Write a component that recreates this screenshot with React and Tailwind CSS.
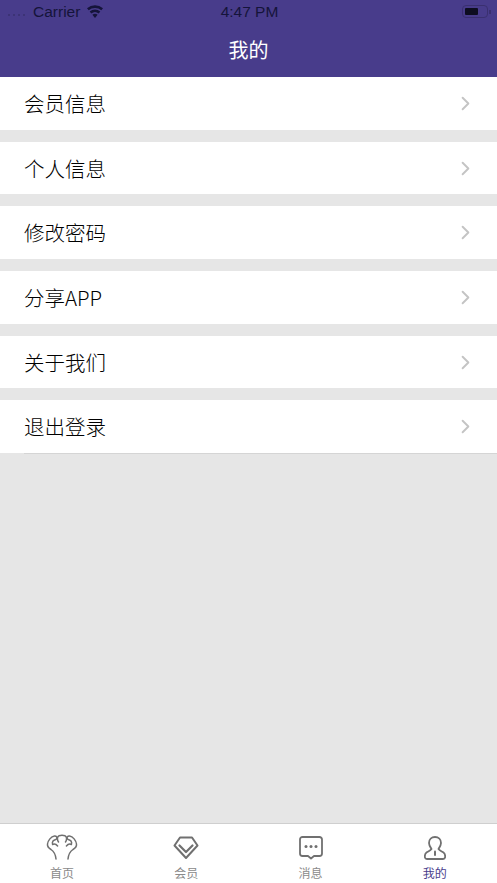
import { ChevronRight } from "lucide-react";

const font = "font-['Noto_Sans_CJK_SC','Liberation_Sans',sans-serif]";
const menu = ["会员信息", "个人信息", "修改密码", "分享APP", "关于我们", "退出登录"];

function MuscleIcon() {
  return (
    <svg width="32" height="28" viewBox="0 0 32 28" fill="none" stroke="#707070" strokeWidth="1.500" strokeLinecap="round" strokeLinejoin="round">
      <path d="M10 25C9.500 20 8 17.500 5 15.500 2.500 14 1.200 12.500 1.500 10 2 6.500 5 2.500 8.500 2c2-.2 3 1.500 2 3-.8.800-2.500.600-3.500 2-.7 1-.8 2.200-.4 3.500 1.500-.8 3.500-.4 5 1.500" />
      <path d="M22 25c.5-5 2-7.500 5-9.500 2.500-1.500 3.800-3 3.500-5.500C30 6.500 27 2.500 23.500 2c-2-.2-3 1.500-2 3 .8.800 2.500.600 3.500 2 .7 1 .8 2.200.4 3.500-1.500-.8-3.500-.4-5 1.500" />
      <path d="M12.500 8C11 6 11 2.500 13 1.800c2-.8 4-.8 6 0 2 .7 2 4.200.5 6.200" />
    </svg>
  );
}

function DiamondIcon() {
  return (
    <svg width="26" height="24" viewBox="0 0 26 24" fill="none" stroke="#707070" strokeWidth="2" strokeLinejoin="round" strokeLinecap="round">
      <path d="M7 1.500h12l5.500 8L13 22 1.500 9.500z" />
      <path d="M6.500 9.500l6.500 6.500 6.500-6.500" strokeWidth="2.200" />
    </svg>
  );
}

function ChatIcon() {
  return (
    <svg width="24" height="24" viewBox="0 0 24 24" fill="none" stroke="#707070" strokeWidth="1.800" strokeLinejoin="round">
      <path d="M3.500 1h17A2.500 2.500 0 0 1 23 3.500v14a2.500 2.500 0 0 1-2.500 2.500H15l-3 2.500L9 20H3.500A2.500 2.500 0 0 1 1 17.500v-14A2.500 2.500 0 0 1 3.500 1z" />
      <circle cx="7" cy="10.500" r="1.500" fill="#707070" stroke="none" />
      <circle cx="12" cy="10.500" r="1.500" fill="#707070" stroke="none" />
      <circle cx="17" cy="10.500" r="1.500" fill="#707070" stroke="none" />
    </svg>
  );
}

function PersonIcon() {
  return (
    <svg width="22" height="24" viewBox="0 0 22 24" fill="none" stroke="#707070" strokeWidth="1.800" strokeLinejoin="round" strokeLinecap="round">
      <path d="M11 1c3.500 0 6 2.500 6 6 0 2.500-1.500 4.500-2.500 6 1 1.500 3 2.200 5 3.500 1.500 1 1.700 2.500 1.700 4 0 1.500-.7 2.500-2.200 2.500H3c-1.500 0-2.200-1-2.200-2.500 0-1.500.2-3 1.700-4 2-1.300 4-2 5-3.500C6.500 11.500 5 9.500 5 7c0-3.500 2.500-6 6-6z" />
      <path d="M11 15.500v3.500" strokeWidth="2" />
    </svg>
  );
}

const tabs = [
  { label: "首页", icon: <MuscleIcon />, color: "text-[#8a8a8a]" },
  { label: "会员", icon: <DiamondIcon />, color: "text-[#8a8a8a]" },
  { label: "消息", icon: <ChatIcon />, color: "text-[#8a8a8a]" },
  { label: "我的", icon: <PersonIcon />, color: "text-[#483c8b]" },
];

export default function App() {
  return (
    <div className={`${font} w-[497px] h-[883px] flex flex-col bg-[#e6e6e6] overflow-hidden`}>
      {/* Status bar + title */}
      <header className="h-[77px] shrink-0 bg-[#483c8b] flex flex-col">
        <div className="h-[25px] pl-[8px] pr-[6px] pb-[2px] flex items-center justify-between font-['Liberation_Sans',sans-serif] text-[15.500px] text-[#15143a]">
          <div className="w-[150px] flex items-center">
            <div className="w-[25px] flex gap-[3px] items-center pt-[6px]">
              <span className="w-[2px] h-[2px] rounded-full bg-[#39306f]" />
              <span className="w-[2px] h-[2px] rounded-full bg-[#39306f]" />
              <span className="w-[2px] h-[2px] rounded-full bg-[#39306f]" />
              <span className="w-[2px] h-[2px] rounded-full bg-[#39306f]" />
            </div>
            <span>Carrier</span>
            <svg className="ml-[6px]" width="18" height="13" viewBox="0 0 18 13" fill="#15143a">
              <path d="M9 13l-2.600-3.200a4 4 0 0 1 5.200 0z" />
              <path d="M5.300 8.500L3.700 6.500a8.200 8.200 0 0 1 10.600 0l-1.600 2a5.800 5.800 0 0 0-7.400 0z" />
              <path d="M2.700 5.300L1 3.200a12.300 12.300 0 0 1 16 0l-1.700 2.100a9.700 9.700 0 0 0-12.600 0z" />
            </svg>
          </div>
          <span>4:47 PM</span>
          <div className="w-[150px] flex justify-end items-center">
            <div className="w-[26px] h-[13px] rounded-[4px] border border-[#3a3070] p-[2px]">
              <div className="w-[13px] h-full rounded-[1px] bg-[#0d0d20]" />
            </div>
            <div className="w-[1.500px] h-[4px] ml-[1px] bg-[#3a3070]" />
          </div>
        </div>
        <div className="flex-1 flex items-center justify-center text-white text-[20px] pb-[2px]">我的</div>
      </header>

      {/* Menu */}
      <main className="flex-1 flex flex-col gap-[12px]">
        {menu.map((item) => (
          <div key={item} className="h-[52.700px] bg-white flex items-center justify-between pl-[24px] pr-[20px]">
            <span className="text-[20.500px] font-light text-black">{item}</span>
            <ChevronRight size={23} strokeWidth={2} className="text-[#c4c4c4]" />
          </div>
        ))}
        <div className="-mt-[12px] ml-[24px] h-px bg-[#d5d5d5]" />
      </main>

      {/* Tab bar */}
      <nav className="h-[60px] shrink-0 bg-white border-t border-[#cfcfcf] grid grid-cols-4">
        {tabs.map((tab) => (
          <div key={tab.label} className="flex flex-col items-center">
            <div className="h-[41px] flex items-center justify-center pt-[7px]">{tab.icon}</div>
            <span className={`text-[12px] leading-[16px] ${tab.color}`}>{tab.label}</span>
          </div>
        ))}
      </nav>
    </div>
  );
}
